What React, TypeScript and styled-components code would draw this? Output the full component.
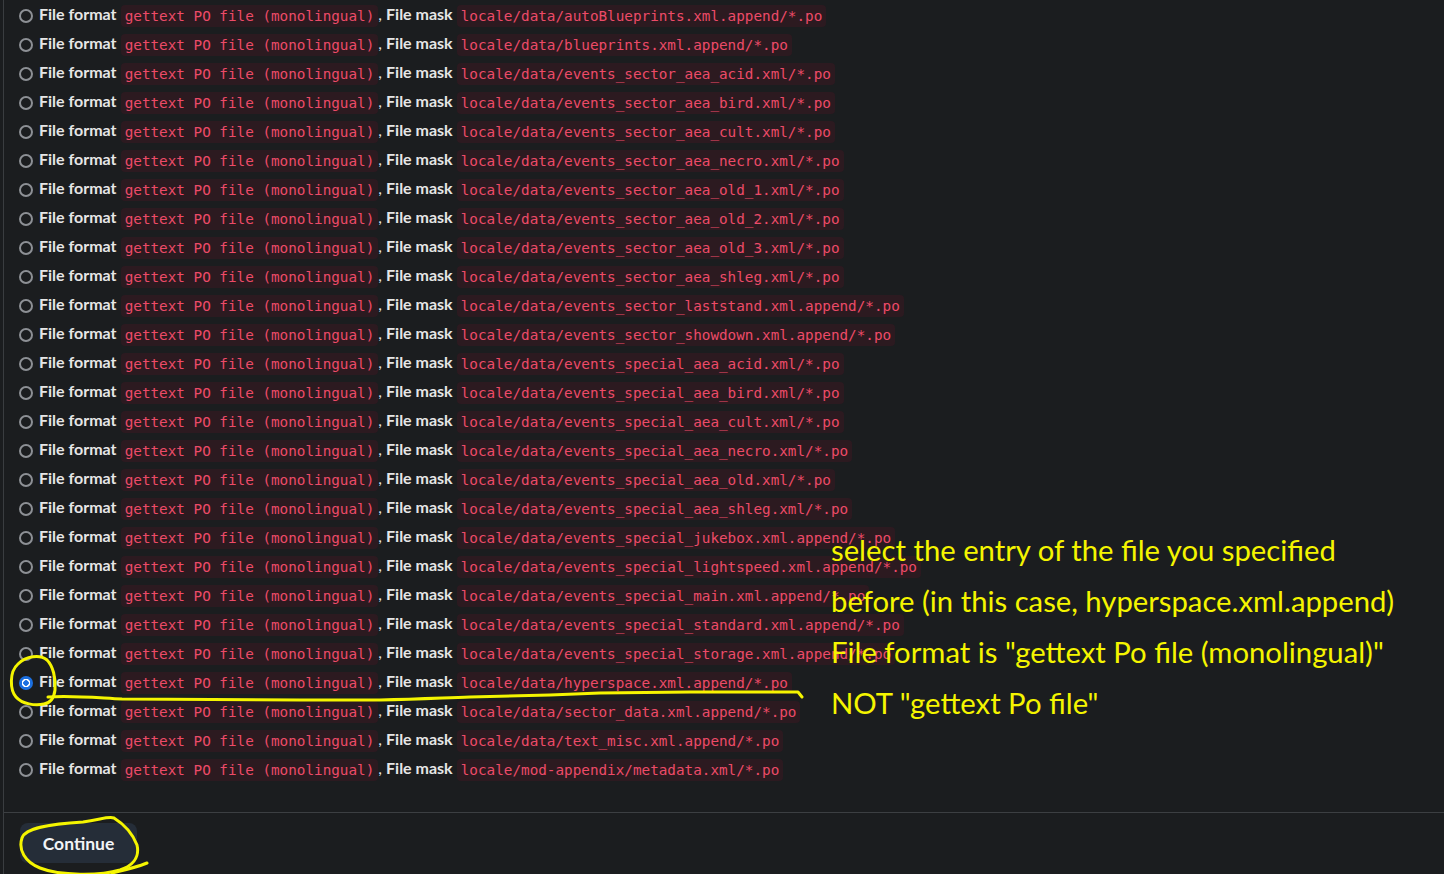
import React from "react";
import styled, { createGlobalStyle } from "styled-components";

const GlobalStyle = createGlobalStyle`
  html, body {
    margin: 0;
    padding: 0;
    background: #1b1d1f;
  }
  * { box-sizing: border-box; }
`;

const Page = styled.div`
  position: relative;
  margin-left: 3px;
  min-height: 874px;
  border-left: 1px solid #3a3d40;
  overflow: hidden;
  font-family: Lato, "Noto Sans", sans-serif;
`;

const List = styled.div`
  display: flex;
  flex-direction: column;
  padding: 1px 0 28px 15px;
`;

const Row = styled.label`
  display: flex;
  align-items: center;
  height: 29px;
  gap: 6px;
  white-space: nowrap;
`;

const Radio = styled.span<{ $checked?: boolean }>`
  flex: none;
  width: 14px;
  height: 14px;
  border-radius: 50%;
  border: ${(p) => (p.$checked ? "0" : "2px solid #8d9095")};
  background: ${(p) =>
    p.$checked
      ? "radial-gradient(circle, #1b6fe0 0 2.5px, #ffffff 3px 4px, #1b6fe0 4.5px)"
      : "transparent"};
`;

const Line = styled.span`
  font-size: 16px;
  color: #e6e6e6;
`;

const Label = styled.b`
  font-weight: 700;
`;

const Code = styled.code`
  display: inline-block;
  font-family: "DejaVu Sans Mono", "Liberation Mono", monospace;
  font-size: 14.3px;
  line-height: 18px;
  padding: 2px 4px;
  border-radius: 4px;
  color: #ec4b68;
  background: #2c1a20;
  vertical-align: middle;
`;

const Footer = styled.div`
  border-top: 1px solid #3c3f42;
  padding: 10px 16px 14px;
`;

const Button = styled.button`
  height: 40px;
  width: 117px;
  border: 0;
  border-radius: 8px;
  background: #252d38;
  color: #f2f4f7;
  font-family: Lato, "Noto Sans", sans-serif;
  font-weight: 700;
  font-size: 17.5px;
`;

const Overlay = styled.svg`
  position: absolute;
  left: -4px;
  top: 0;
  width: 1444px;
  height: 874px;
  pointer-events: none;
`;

const Note = styled.div`
  position: absolute;
  left: 827px;
  top: 524px;
  font-family: Lato, "Noto Sans", sans-serif;
  font-size: 29.25px;
  line-height: 51px;
  color: #f5f500;
  white-space: nowrap;
  pointer-events: none;
`;

const masks = [
  "locale/data/autoBlueprints.xml.append/*.po",
  "locale/data/blueprints.xml.append/*.po",
  "locale/data/events_sector_aea_acid.xml/*.po",
  "locale/data/events_sector_aea_bird.xml/*.po",
  "locale/data/events_sector_aea_cult.xml/*.po",
  "locale/data/events_sector_aea_necro.xml/*.po",
  "locale/data/events_sector_aea_old_1.xml/*.po",
  "locale/data/events_sector_aea_old_2.xml/*.po",
  "locale/data/events_sector_aea_old_3.xml/*.po",
  "locale/data/events_sector_aea_shleg.xml/*.po",
  "locale/data/events_sector_laststand.xml.append/*.po",
  "locale/data/events_sector_showdown.xml.append/*.po",
  "locale/data/events_special_aea_acid.xml/*.po",
  "locale/data/events_special_aea_bird.xml/*.po",
  "locale/data/events_special_aea_cult.xml/*.po",
  "locale/data/events_special_aea_necro.xml/*.po",
  "locale/data/events_special_aea_old.xml/*.po",
  "locale/data/events_special_aea_shleg.xml/*.po",
  "locale/data/events_special_jukebox.xml.append/*.po",
  "locale/data/events_special_lightspeed.xml.append/*.po",
  "locale/data/events_special_main.xml.append/*.po",
  "locale/data/events_special_standard.xml.append/*.po",
  "locale/data/events_special_storage.xml.append/*.po",
  "locale/data/hyperspace.xml.append/*.po",
  "locale/data/sector_data.xml.append/*.po",
  "locale/data/text_misc.xml.append/*.po",
  "locale/mod-appendix/metadata.xml/*.po",
];

export default function App() {
  return (
    <>
      <GlobalStyle />
      <Page>
        <List>
          {masks.map((m) => (
            <Row key={m}>
              <Radio $checked={m.includes("hyperspace")} />
              <Line>
                <Label>File format</Label> <Code>gettext PO file (monolingual)</Code>, <Label>File mask</Label>{" "}
                <Code>{m}</Code>
              </Line>
            </Row>
          ))}
        </List>
        <Footer>
          <Button>Continue</Button>
        </Footer>
        <Note>
          <div>select the entry of the file you specified</div>
          <div>before (in this case, hyperspace.xml.append)</div>
          <div>File format is "gettext Po file (monolingual)"</div>
          <div>NOT "gettext Po file"</div>
        </Note>
        <Overlay viewBox="0 0 1444 874">
          <g fill="none" stroke="#f5f500" strokeWidth="3" strokeLinecap="round" strokeLinejoin="round">
            <path d="M 18 664 C 26 656, 40 654, 47 660 C 53 666, 56 678, 55 690 C 54 698, 50 703, 44 704 C 35 706, 22 704, 16 697 C 10 690, 9 672, 18 664" />
            <path d="M 48 697 C 70 695, 100 698, 122 699 L 300 700 L 380 700 C 420 699, 440 698, 470 697 L 550 695 L 600 693 L 690 692 L 798 692 L 802 697" />
            <path d="M 22 838 C 25 828, 50 824, 83 822 C 100 820, 108 816, 114 818 C 122 823, 132 832, 137 845 C 140 858, 132 866, 120 870 C 100 876, 60 876, 40 868 C 25 862, 18 850, 22 838" />
            <path d="M 112 873 C 125 870, 140 866, 147 863" />
          </g>
        </Overlay>
      </Page>
    </>
  );
}
